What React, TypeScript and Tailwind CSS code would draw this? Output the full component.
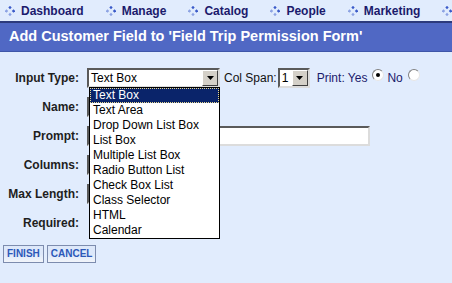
import React from "react";

const navItems = ["Dashboard", "Manage", "Catalog", "People", "Marketing", ""];

const inputTypes = [
  "Text Box",
  "Text Area",
  "Drop Down List Box",
  "List Box",
  "Multiple List Box",
  "Radio Button List",
  "Check Box List",
  "Class Selector",
  "HTML",
  "Calendar",
];

function Diamond() {
  return (
    <svg width="10" height="10" viewBox="0 0 10 10" className="shrink-0">
      <rect x="3.8" y="0.3" width="2.4" height="2.4" transform="rotate(45 5 1.5)" fill="#3b5bc9" />
      <rect x="0.3" y="3.8" width="2.4" height="2.4" transform="rotate(45 1.5 5)" fill="#8da3e3" />
      <rect x="7.3" y="3.8" width="2.4" height="2.4" transform="rotate(45 8.5 5)" fill="#3b5bc9" />
      <rect x="3.8" y="7.3" width="2.4" height="2.4" transform="rotate(45 5 8.5)" fill="#8da3e3" />
    </svg>
  );
}

function ArrowButton() {
  return (
    <div className="w-[16px] h-full bg-[#d4d0c8] border border-t-white border-l-white border-b-[#404040] border-r-[#404040] flex items-center justify-center">
      <svg width="7" height="4" viewBox="0 0 7 4">
        <path d="M0 0 H7 L3.5 4 Z" fill="#000" />
      </svg>
    </div>
  );
}

function Radio({ checked }: { checked?: boolean }) {
  return (
    <span className="inline-flex w-[12px] h-[12px] rounded-full bg-white border border-t-[#808080] border-l-[#808080] border-b-[#e6e6e6] border-r-[#e6e6e6] items-center justify-center -translate-y-[3px]">
      {checked && <span className="w-[4px] h-[4px] rounded-full bg-black" />}
    </span>
  );
}

const inset =
  "bg-white border-2 border-t-[#5a5a5a] border-l-[#5a5a5a] border-b-[#dcdcdc] border-r-[#dcdcdc]";

function Row({ label, children }: { label: string; children?: React.ReactNode }) {
  return (
    <div className="flex items-center h-[20px]">
      <div className="w-[79px] text-right text-[12px] font-bold text-[#1e1e1e]">{label}</div>
      <div className="ml-[8px] flex items-center h-full">{children}</div>
    </div>
  );
}

export default function App() {
  return (
    <div
      className="w-[452px] h-[283px] overflow-hidden bg-[#e1ecfd] relative"
      style={{ fontFamily: '"Liberation Sans", Arial, sans-serif' }}
    >
      <nav className="h-[21px] flex items-center pl-[5px]">
        {navItems.map((item, i) => (
          <div key={i} className="flex items-center mr-[22px]">
            <Diamond />
            {item && <span className="ml-[6px] text-[12px] font-bold text-[#1b1a6c]">{item}</span>}
          </div>
        ))}
      </nav>

      <div className="h-[31px] border-t-2 border-[#2c3a7c] border-b border-b-[#3f56a8] bg-[#5068c4] flex items-center pl-[9px]">
        <h1 className="text-[14.5px] font-bold text-white">Add Customer Field to 'Field Trip Permission Form'</h1>
      </div>

      <div className="relative pt-[16px] flex flex-col gap-[9px]">
        <Row label="Input Type:">
          <div className={`${inset} w-[133px] h-[20px] flex items-center justify-between`}>
            <span className="pl-[2px] text-[12px] text-black">Text Box</span>
            <ArrowButton />
          </div>
          <span className="ml-[4px] text-[12px] text-[#111]">Col Span:</span>
          <div className={`${inset} ml-[1px] w-[32px] h-[20px] flex items-center justify-between`}>
            <span className="pl-[2px] text-[12px] text-black">1</span>
            <ArrowButton />
          </div>
          <span className="ml-[7px] text-[12px] text-[#1b1a6c]">Print: Yes</span>
          <span className="ml-[5px] flex">
            <Radio checked />
          </span>
          <span className="ml-[3px] text-[12px] text-[#1b1a6c]">No</span>
          <span className="ml-[5px] flex">
            <Radio />
          </span>
        </Row>
        <Row label="Name:">
          <div className={`${inset} w-[120px] h-[20px]`} />
        </Row>
        <Row label="Prompt:">
          <div className={`${inset} w-[283px] h-[20px]`} />
        </Row>
        <Row label="Columns:">
          <div className={`${inset} w-[40px] h-[20px]`} />
        </Row>
        <Row label="Max Length:">
          <div className={`${inset} w-[40px] h-[20px]`} />
        </Row>
        <Row label="Required:">
          <input type="checkbox" className="ml-[4px] w-[13px] h-[13px]" />
        </Row>

        <div className="flex gap-[3px] pl-[3px] pt-[3px]">
          {["FINISH", "CANCEL"].map((b) => (
            <button
              key={b}
              className="h-[18px] px-[3px] border border-[#7d8cae] bg-gradient-to-b from-[#dde8fa] via-[#dde8fa] to-[#f2f5fa] text-[10px] font-bold text-[#2c58b8] leading-none"
            >
              {b}
            </button>
          ))}
        </div>

        <ul className="absolute left-[89px] top-[35px] w-[131px] bg-white border border-black">
          {inputTypes.map((t, i) => (
            <li
              key={t}
              className={
                i === 0
                  ? "h-[15px] leading-[13px] pl-[2px] text-[12px] text-white bg-[#0a246a] border border-dotted border-[#e8d890]"
                  : "h-[15px] leading-[15px] pl-[3px] text-[12px] text-black"
              }
            >
              {t}
            </li>
          ))}
        </ul>
      </div>
    </div>
  );
}
